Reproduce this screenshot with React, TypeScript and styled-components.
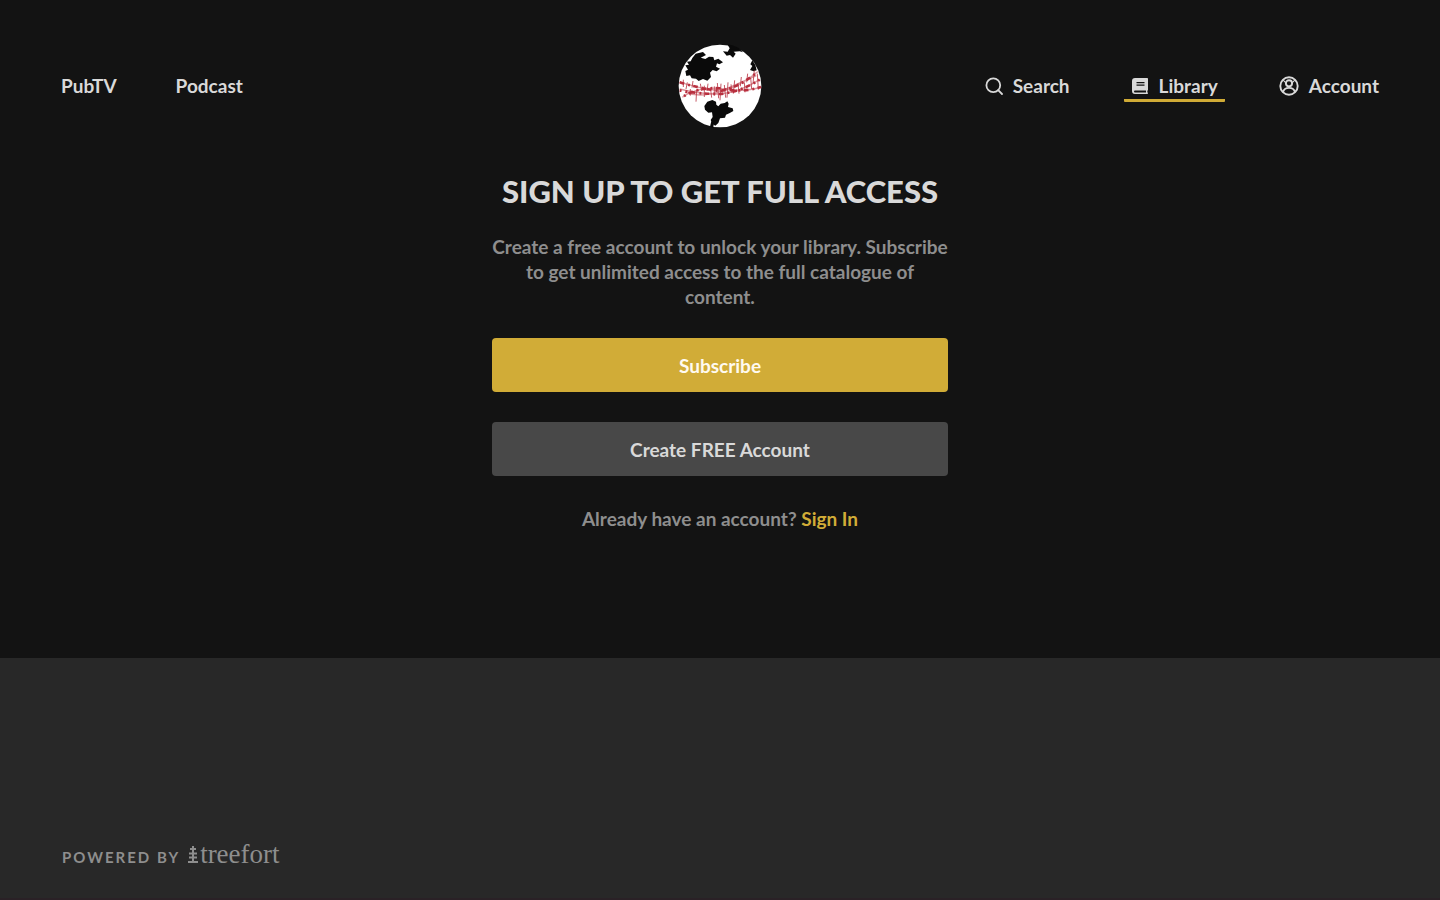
import React from "react";
import styled, { createGlobalStyle } from "styled-components";

const GlobalStyle = createGlobalStyle`
  *, *::before, *::after { box-sizing: border-box; }
  body {
    margin: 0;
    background: #131313;
    color: #d9d9d9;
    font-family: Lato, "Open Sans", sans-serif;
    font-size: 19px;
    line-height: 25px;
  }
`;

const Page = styled.div`
  display: flex;
  flex-direction: column;
  min-height: 100vh;
`;

const Header = styled.header`
  display: grid;
  grid-template-columns: 1fr auto 1fr;
  align-items: center;
  padding: 44px 54px;
`;

const Nav = styled.nav<{ $align?: "start" | "end"; $gap: number }>`
  display: flex;
  justify-content: ${(p) => p.$align ?? "start"};
  gap: ${(p) => p.$gap}px;
`;

const NavLink = styled.a<{ $active?: boolean }>`
  display: flex;
  align-items: center;
  gap: 10px;
  padding: 1px 7px;
  border-bottom: 3px solid ${(p) => (p.$active ? "#d0ab36" : "transparent")};
  border-top: 3px solid transparent;
  border-radius: 1px;
  color: #d9d9d9;
  font-weight: 700;
  line-height: 24px;
  text-decoration: none;
`;

const LogoLink = styled.a`
  display: block;
  height: 84px;
`;

const Main = styled.main`
  display: flex;
  flex-direction: column;
  align-items: center;
  width: 100%;
  max-width: 456px;
  margin: 0 auto;
  padding-bottom: 127px;
  text-align: center;
`;

const Title = styled.h1`
  margin: 0 0 24px;
  font-size: 31px;
  font-weight: 900;
  line-height: 38px;
  white-space: nowrap;
`;

const Copy = styled.p<{ $space: number }>`
  margin: 0 0 ${(p) => p.$space}px;
  color: #8e8e8e;
  font-weight: 700;
`;

const ActionButton = styled.button<{ $primary?: boolean }>`
  width: 100%;
  height: 54px;
  margin: 0 0 30px;
  padding: 0;
  border: 0;
  border-radius: 4px;
  background: ${(p) => (p.$primary ? "#d1ac37" : "#484848")};
  color: ${(p) => (p.$primary ? "#fffaf0" : "#d9d9d9")};
  font: inherit;
  font-weight: 700;
  cursor: pointer;
`;

const SignInLink = styled.a`
  color: #d1ac37;
  text-decoration: none;
`;

const Footer = styled.footer`
  display: flex;
  flex: 1;
  align-items: flex-end;
  padding: 120px 62px 28px;
  border-bottom: 2px solid #2a2126;
  background: #282828;
  color: #8e8e8e;
`;

const Powered = styled.div`
  display: flex;
  align-items: baseline;
  gap: 8px;
  font-size: 15px;
  font-weight: 700;
  letter-spacing: 2px;
`;

const Brand = styled.a`
  display: flex;
  align-items: baseline;
  gap: 2px;
  color: inherit;
  font-family: "Liberation Serif", serif;
  font-size: 27px;
  font-weight: 400;
  letter-spacing: 0;
  text-decoration: none;
`;

const SearchIcon = () => (
  <svg width="18" height="18" viewBox="0 0 18 18" fill="none" stroke="currentColor" strokeWidth="1.8" aria-hidden="true">
    <circle cx="8.3" cy="8.3" r="6.9" />
    <path d="M13.2 13.2 17 17" strokeLinecap="round" />
  </svg>
);

const BookIcon = () => (
  <svg width="18" height="18" viewBox="0 0 18 18" aria-hidden="true">
    <path
      fill="currentColor"
      fillRule="evenodd"
      d="M4 1h12.2q.8 0 .8.8v11q0 .6-.5.8-.4 1 0 1.9.5.2.5.7 0 .8-.8.8H4q-3 0-3-3V4q0-3 3-3ZM5.5 5v1.2h8V5ZM5.5 7.6v1.2h8V7.6ZM4 13.6q-1 0-1 .9t1 .9h11v-1.8Z"
    />
  </svg>
);

const AccountIcon = () => (
  <svg width="20" height="20" viewBox="0 0 20 20" fill="none" stroke="currentColor" strokeWidth="1.9" aria-hidden="true">
    <circle cx="10" cy="10" r="8.7" />
    <circle cx="10" cy="7.3" r="3.1" />
    <path d="M4 16q1.2-4.1 6-4.1t6 4.1" />
    <path d="m4.2 4.2 3.2 3.2M15.8 4.2l-3.2 3.2" strokeWidth="1.1" />
  </svg>
);

const TreeIcon = () => (
  <svg width="10" height="18" viewBox="0 0 10 18" fill="none" stroke="currentColor" strokeWidth="2" aria-hidden="true">
    <path d="M5 1v16M2 4h6M1 8.5h8M1 12.5h8M0 17h10" />
  </svg>
);

const Globe = () => (
  <svg width="84" height="84" viewBox="55 43 252 252" role="img" aria-label="Home">
    <circle cx="181" cy="169" r="124" fill="#fff" />
    <g fill="#0a0a0a">
      <path d="M98 85 108 72 130 67 139 76 123 84 137 88 148 81 161 82 164 92 176 87 190 98 179 104 172 101 169 111 181 117 171 125 159 121 151 129 154 142 143 153 130 148 117 154 109 147 96 146 91 137 80 139 77 124 85 120 77 107 88 105 82 96 93 95Z" />
      <path d="M203 44 210 56 204 66 190 65 201 78 211 76 220 84 228 72 222 66 240 65 250 68 236 54 218 47Z" />
      <path d="m278 92-6 12 6 5-7 12 11 4 9-3-4-16Z" />
      <path d="m143 216 15-5 11 5 1 9 6 5 7-8 12-2 8-5 4 7-2 10 14 4 2 8-12 7-10 4-3 9-15 2-5 14-9 8-9-5-5-12 6-9-2-14-11 1-10-9-2-11Z" />
      <path d="m155 274 7 9-1 12-10-4Z" />
    </g>
    <g fill="none" stroke="#b82f3e">
      <g strokeWidth="4" opacity=".5">
        <path d="M60 158Q120 176 180 184Q235 176 294 126M60 178Q115 193 180 193Q240 188 300 150M68 203Q110 172 180 176Q250 190 304 172M76 188Q120 205 180 186Q240 160 290 138" />
      </g>
      <g strokeWidth="8" strokeDasharray="14 12 6 10">
        <path d="M60 158Q120 176 180 184Q235 176 294 126" />
        <path d="M60 182Q115 193 180 193Q240 188 300 150" strokeDashoffset="8" />
        <path d="M68 203Q110 172 180 176Q250 190 304 172" strokeDashoffset="20" />
      </g>
      <path
        strokeWidth="3"
        opacity=".8"
        d="M71 150v22M83 158l-4 20M92 178v20M100 154l-3 20M111 180l-2 36M122 162l4 22M134 168v34M145 162l-3 22M153 180l3 24M164 170v28M173 160l4 46M184 162l-3 50M194 166l4 38M205 158l-3 46M214 164l3 26M225 152l-4 40M235 160l3 32M245 142l-3 28M254 158l2 30M264 132l-3 26M273 144l3 34M284 122l-4 40M293 132l3 48"
      />
    </g>
  </svg>
);

export default function App() {
  return (
    <>
      <GlobalStyle />
      <Page>
        <Header>
          <Nav aria-label="Channels" $gap={45}>
            <NavLink href="#pubtv">PubTV</NavLink>
            <NavLink href="#podcast">Podcast</NavLink>
          </Nav>
          <LogoLink href="#home">
            <Globe />
          </LogoLink>
          <Nav aria-label="Account" $align="end" $gap={47}>
            <NavLink href="#search">
              <SearchIcon />
              Search
            </NavLink>
            <NavLink href="#library" $active aria-current="page">
              <BookIcon />
              Library
            </NavLink>
            <NavLink href="#account">
              <AccountIcon />
              Account
            </NavLink>
          </Nav>
        </Header>
        <Main>
          <Title>SIGN UP TO GET FULL ACCESS</Title>
          <Copy $space={29}>
            Create a free account to unlock your library. Subscribe to get unlimited access to the full catalogue of
            content.
          </Copy>
          <ActionButton type="button" $primary>
            Subscribe
          </ActionButton>
          <ActionButton type="button">Create FREE Account</ActionButton>
          <Copy $space={0}>
            Already have an account? <SignInLink href="#sign-in">Sign In</SignInLink>
          </Copy>
        </Main>
        <Footer>
          <Powered>
            POWERED BY
            <Brand href="#treefort">
              <TreeIcon />
              treefort
            </Brand>
          </Powered>
        </Footer>
      </Page>
    </>
  );
}
